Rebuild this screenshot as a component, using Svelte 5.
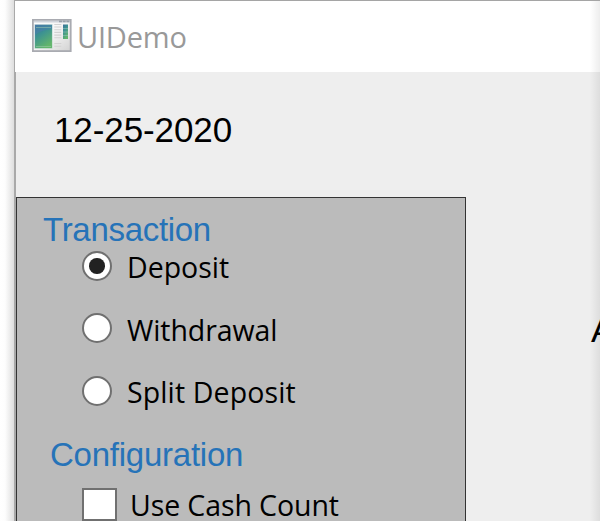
<script>
  let selected = $state('Deposit');
  let useCashCount = $state(false);
  const transactions = [
    { name: 'Deposit', spacing: -0.02 },
    { name: 'Withdrawal', spacing: -0.08 },
    { name: 'Split Deposit', spacing: 0.12 }
  ];
</script>

<div class="desktop">
  <div class="window">
    <header>
      <svg class="app-icon" width="40" height="34" viewBox="0 0 40 34" aria-hidden="true">
        <defs>
          <linearGradient id="frame" x1="0" y1="0" x2="1" y2="1">
            <stop offset="0" stop-color="#ffffff" />
            <stop offset="0.5" stop-color="#f4f4f4" />
            <stop offset="1" stop-color="#d2d2d2" />
          </linearGradient>
          <linearGradient id="panel" x1="0" y1="0" x2="0.5" y2="1">
            <stop offset="0" stop-color="#3d7199" />
            <stop offset="0.45" stop-color="#3c9292" />
            <stop offset="1" stop-color="#62b56b" />
          </linearGradient>
        </defs>
        <rect x="0.9" y="0.9" width="37.8" height="31.2" fill="url(#frame)" stroke="#a9abb1" stroke-width="1.8" />
        <path d="M2 2.6H38" stroke="#cfd3da" stroke-width="1.8" />
        <path d="M27 2.4H37.5" stroke="#9aa1aa" stroke-width="1.6" stroke-dasharray="3 0.7" />
        <rect x="2.8" y="5.4" width="17.4" height="24" fill="url(#panel)" stroke="#d5e2e4" stroke-width="0.5" />
        <path d="M3 16Q9 11 20 10V6H3Z" fill="#4b80ad" opacity="0.55" />
        <path d="M4 8.5H19M4 27.5H19" stroke="#a5d0b2" stroke-width="0.7" opacity="0.7" />
        <path d="M22.3 5.5H29.3M22.3 8H29.3M22.3 10.7H29.3M22.3 13.4H29.3M22.3 16.1H29.3M22.3 18.8H29.3M22.3 24.5H29.3M22.3 27.2H29.3" stroke="#d2d2d2" stroke-width="1.1" />
        <rect x="31" y="5.5" width="5" height="14.5" fill="url(#panel)" />
        <path d="M31 9.5H36M31 13H36M31 16.5H36" stroke="#94c1b8" stroke-width="0.6" />
      </svg>
      <span class="title">UIDemo</span>
    </header>
    <main>
      <div class="date">12-25-2020</div>
      <div class="columns">
        <section class="panel">
          <h2>Transaction</h2>
          <div class="options">
            {#each transactions as t}
              <button class="option" onclick={() => (selected = t.name)}>
                <span class="radio" class:checked={selected === t.name}></span>
                <span class="label" style="letter-spacing: {t.spacing}px">{t.name}</span>
              </button>
            {/each}
          </div>
          <h2 class="config">Configuration</h2>
          <button class="option check" onclick={() => (useCashCount = !useCashCount)}>
            <span class="box">{useCashCount ? '✓' : ''}</span>
            <span class="label">Use Cash Count</span>
          </button>
        </section>
        <div class="account">A</div>
      </div>
    </main>
  </div>
  <div class="edge"></div>
</div>

<style>
  .desktop {
    position: relative;
    width: 600px;
    height: 521px;
    overflow: hidden;
    box-sizing: border-box;
    padding-left: 14px;
    background: linear-gradient(90deg, #fff 0, #fdfdfd 5px, #dedede 14px);
    font-family: "Open Sans", "Noto Sans", sans-serif;
  }
  .window {
    width: 586px;
    height: 521px;
    box-sizing: border-box;
    border-top: 1px solid #a5a5a5;
    border-left: 1px solid #a9a9a9;
    background: #fff;
  }
  header {
    display: flex;
    height: 71px;
    box-sizing: border-box;
    padding: 18px 0 0 17px;
  }
  .app-icon {
    flex: none;
  }
  .title {
    margin: -2px 0 0 5px;
    color: #999;
    font-size: 29px;
    line-height: 40px;
    letter-spacing: -0.2px;
  }
  main {
    height: 449px;
    border-left: 1px solid #a9a9a9;
    background: #eee;
    overflow: hidden;
  }
  .date {
    height: 125px;
    box-sizing: border-box;
    padding: 38px 0 0 38px;
    font: 35px/40px "Liberation Sans", Arial, sans-serif;
    letter-spacing: -0.1px;
  }
  .columns {
    display: flex;
  }
  .panel {
    flex: none;
    width: 450px;
    height: 340px;
    box-sizing: border-box;
    border: 1px solid #333;
    background: #bbb;
  }
  h2 {
    margin: 11px 0 0 26px;
    color: #2673b8;
    font: 33px/42px "Liberation Sans", Arial, sans-serif;
    letter-spacing: -0.3px;
  }
  h2.config {
    margin: 1px 0 0 33px;
    letter-spacing: -0.24px;
  }
  .options {
    margin-top: -6px;
  }
  .option {
    display: flex;
    height: 62.6px;
    margin: 0 0 0 65px;
    padding: 6px 0 0;
    border: 0;
    background: none;
    color: #000;
    font: 28.5px/40px "Open Sans", "Noto Sans", sans-serif;
    white-space: nowrap;
  }
  .radio {
    flex: none;
    display: flex;
    align-items: center;
    justify-content: center;
    width: 30px;
    height: 30px;
    box-sizing: border-box;
    border: 2px solid #707070;
    border-radius: 50%;
    background: #fff;
  }
  .option:nth-child(2) .radio {
    margin-top: -0.4px;
  }
  .radio.checked::after {
    content: "";
    width: 15.5px;
    height: 15.5px;
    border-radius: 50%;
    background: #222;
  }
  .label {
    margin: -4px 0 0 15px;
  }
  .option.check {
    padding-top: 12px;
  }
  .box {
    flex: none;
    width: 35px;
    height: 33px;
    box-sizing: border-box;
    border: 2px solid #707070;
    background: #fff;
    font-size: 24px;
    line-height: 28px;
    text-align: center;
  }
  .check .label {
    margin: -3px 0 0 13px;
    letter-spacing: -0.1px;
  }
  .account {
    margin: 113px 0 0 125px;
    font: 35px/40px "Liberation Sans", Arial, sans-serif;
  }
  .edge {
    position: absolute;
    top: 1px;
    right: 0;
    width: 10px;
    height: 520px;
    background: linear-gradient(90deg, transparent, rgba(0, 0, 0, 0.07));
    pointer-events: none;
  }
</style>
